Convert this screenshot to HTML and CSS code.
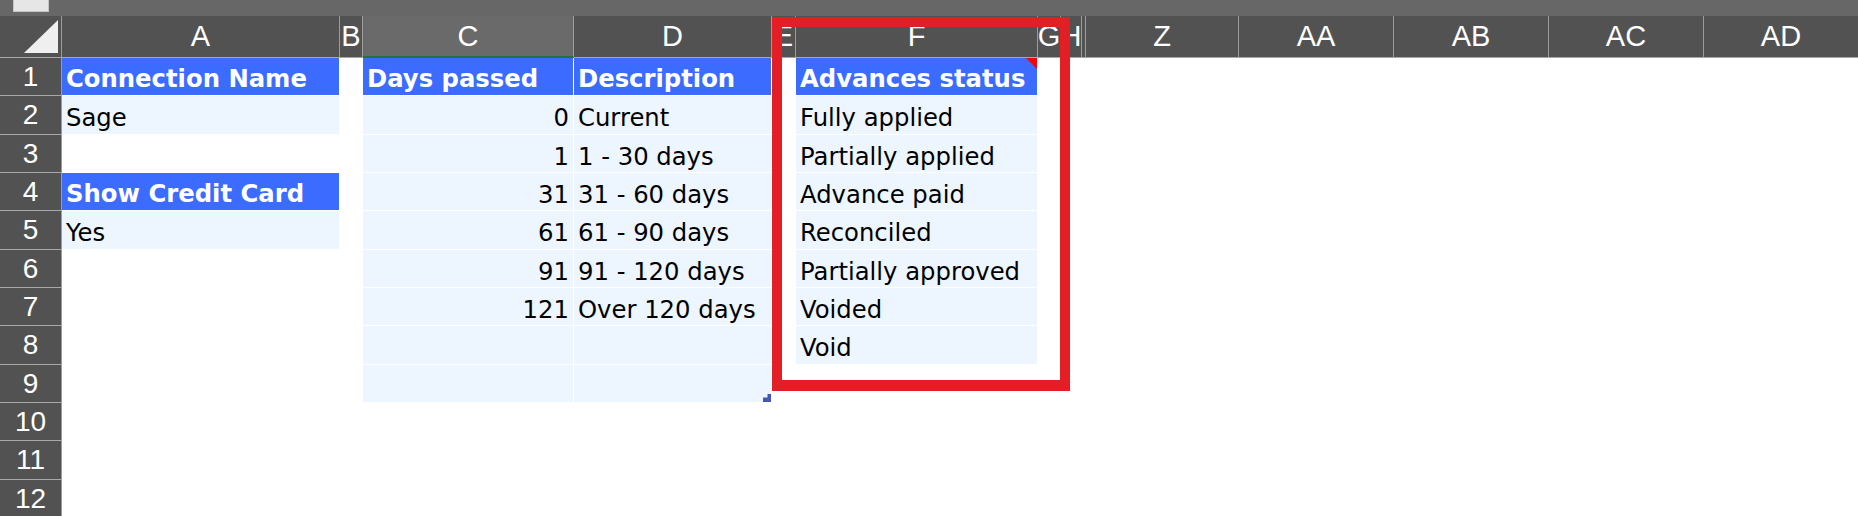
FILE: index.html
```html
<!DOCTYPE html>
<html lang="en">
<head>
    <meta charset="UTF-8">
    <title>Lookups</title>
    <link rel="stylesheet" href="styles.css">
</head>
<body>
    <div class="topbar">
        <div class="name-box"></div>
    </div>

    <div class="sheet">
        <!-- column headers -->
        <div class="corner">
            <svg width="61" height="41" viewBox="0 0 61 41"><polygon points="24,37 58,4 58,37" fill="#efefef"/></svg>
        </div>
        <div class="col-h">A</div>
        <div class="col-h">B</div>
        <div class="col-h selected">C</div>
        <div class="col-h">D</div>
        <div class="col-h">E</div>
        <div class="col-h">F</div>
        <div class="col-h">G</div>
        <div class="col-h">H</div>
        <div class="col-h"></div>
        <div class="col-h">Z</div>
        <div class="col-h">AA</div>
        <div class="col-h">AB</div>
        <div class="col-h">AC</div>
        <div class="col-h">AD</div>

        <!-- row 1 -->
        <div class="row-h">1</div>
        <div class="cell head">Connection Name</div>
        <div class="cell"></div>
        <div class="cell head">Days passed</div>
        <div class="cell head">Description</div>
        <div class="cell"></div>
        <div class="cell head">Advances status<span class="note"></span></div>
        <div class="cell rest"></div>

        <!-- row 2 -->
        <div class="row-h">2</div>
        <div class="cell fill">Sage</div>
        <div class="cell"></div>
        <div class="cell fill num">0</div>
        <div class="cell fill">Current</div>
        <div class="cell"></div>
        <div class="cell fill">Fully applied</div>
        <div class="cell rest"></div>

        <!-- row 3 -->
        <div class="row-h">3</div>
        <div class="cell"></div>
        <div class="cell"></div>
        <div class="cell fill num">1</div>
        <div class="cell fill">1 - 30 days</div>
        <div class="cell"></div>
        <div class="cell fill">Partially applied</div>
        <div class="cell rest"></div>

        <!-- row 4 -->
        <div class="row-h">4</div>
        <div class="cell head">Show Credit Card</div>
        <div class="cell"></div>
        <div class="cell fill num">31</div>
        <div class="cell fill">31 - 60 days</div>
        <div class="cell"></div>
        <div class="cell fill">Advance paid</div>
        <div class="cell rest"></div>

        <!-- row 5 -->
        <div class="row-h">5</div>
        <div class="cell fill">Yes</div>
        <div class="cell"></div>
        <div class="cell fill num">61</div>
        <div class="cell fill">61 - 90 days</div>
        <div class="cell"></div>
        <div class="cell fill">Reconciled</div>
        <div class="cell rest"></div>

        <!-- row 6 -->
        <div class="row-h">6</div>
        <div class="cell"></div>
        <div class="cell"></div>
        <div class="cell fill num">91</div>
        <div class="cell fill">91 - 120 days</div>
        <div class="cell"></div>
        <div class="cell fill">Partially approved</div>
        <div class="cell rest"></div>

        <!-- row 7 -->
        <div class="row-h">7</div>
        <div class="cell"></div>
        <div class="cell"></div>
        <div class="cell fill num">121</div>
        <div class="cell fill">Over 120 days</div>
        <div class="cell"></div>
        <div class="cell fill">Voided</div>
        <div class="cell rest"></div>

        <!-- row 8 -->
        <div class="row-h">8</div>
        <div class="cell"></div>
        <div class="cell"></div>
        <div class="cell fill"></div>
        <div class="cell fill"></div>
        <div class="cell"></div>
        <div class="cell fill">Void</div>
        <div class="cell rest"></div>

        <!-- row 9, end of the table -->
        <div class="row-h">9</div>
        <div class="cell"></div>
        <div class="cell"></div>
        <div class="cell fill"></div>
        <div class="cell fill">
            <svg class="resize" width="8" height="8" viewBox="0 0 8 8"><polygon points="4.5,0 8,0 8,8 0,8 0,3.5 4.5,3.5" fill="#4557b5"/></svg>
        </div>
        <div class="cell"></div>
        <div class="cell"></div>
        <div class="cell rest"></div>

        <div class="row-h">10</div>
        <div class="cell empty-row"></div>
        <div class="row-h">11</div>
        <div class="cell empty-row"></div>
        <div class="row-h">12</div>
        <div class="cell empty-row"></div>
    </div>

    <div class="highlight"></div>
</body>
</html>
```

FILE: styles.css
```css
body {
    margin: 0;
    width: 1858px;
    height: 516px;
    overflow: hidden;
    background: #ffffff;
    position: relative;
}

.topbar {
    height: 16px;
    background: #676767;
}

.name-box {
    width: 34px;
    height: 11px;
    margin-left: 13px;
    background: #e6e6e6;
    border: 1px solid #c4c4c4;
    border-top: none;
}

.sheet {
    display: grid;
    grid-template-columns: 62px 278px 23px 211px 198px 24px 242px 23px 21px 4px 153px repeat(4, 155px);
    grid-template-rows: 42px repeat(12, 38.33px);
}

.corner,
.col-h,
.row-h {
    background: #525252;
    color: #ffffff;
    font-family: "Liberation Sans", Arial, sans-serif;
    box-sizing: border-box;
    border-right: 1px solid #9c9c9c;
    border-bottom: 1px solid #a8a8a8;
    display: flex;
    align-items: center;
    justify-content: center;
    overflow: hidden;
}

.corner svg {
    display: block;
    align-self: flex-start;
}

.col-h {
    font-size: 29px;
}

.col-h.selected {
    background: #6a6a6a;
    border-bottom: 2px solid #217346;
}

.row-h {
    font-size: 28px;
    padding-top: 1px;
}

.cell {
    position: relative;
    box-sizing: border-box;
    border-right: 1px solid #ffffff;
    border-bottom: 1px solid #ffffff;
    padding: 6px 4px 0 4px;
    font-family: "DejaVu Sans", "Liberation Sans", sans-serif;
    font-size: 24.3px;
    line-height: 32px;
    color: #000000;
    white-space: nowrap;
    overflow: hidden;
}

.cell.fill {
    background: #edf5ff;
}

.cell.head {
    background: #3c6bff;
    color: #ffffff;
    font-weight: bold;
    padding-top: 5px;
}

.cell.num {
    text-align: right;
}

.cell.rest {
    grid-column: span 8;
}

.cell.empty-row {
    grid-column: span 14;
}

/* comment marker in the corner of a cell */
.note {
    position: absolute;
    top: 0;
    right: 0;
    width: 0;
    height: 0;
    border-top: 11px solid #ff0000;
    border-left: 11px solid transparent;
}

.resize {
    position: absolute;
    right: 0;
    bottom: 0;
    display: block;
}

/* red frame drawn over the status column */
.highlight {
    position: absolute;
    left: 772px;
    top: 17px;
    width: 298px;
    height: 374px;
    box-sizing: border-box;
    border: 10px solid #e31e24;
    border-bottom-width: 11px;
    pointer-events: none;
}
```
